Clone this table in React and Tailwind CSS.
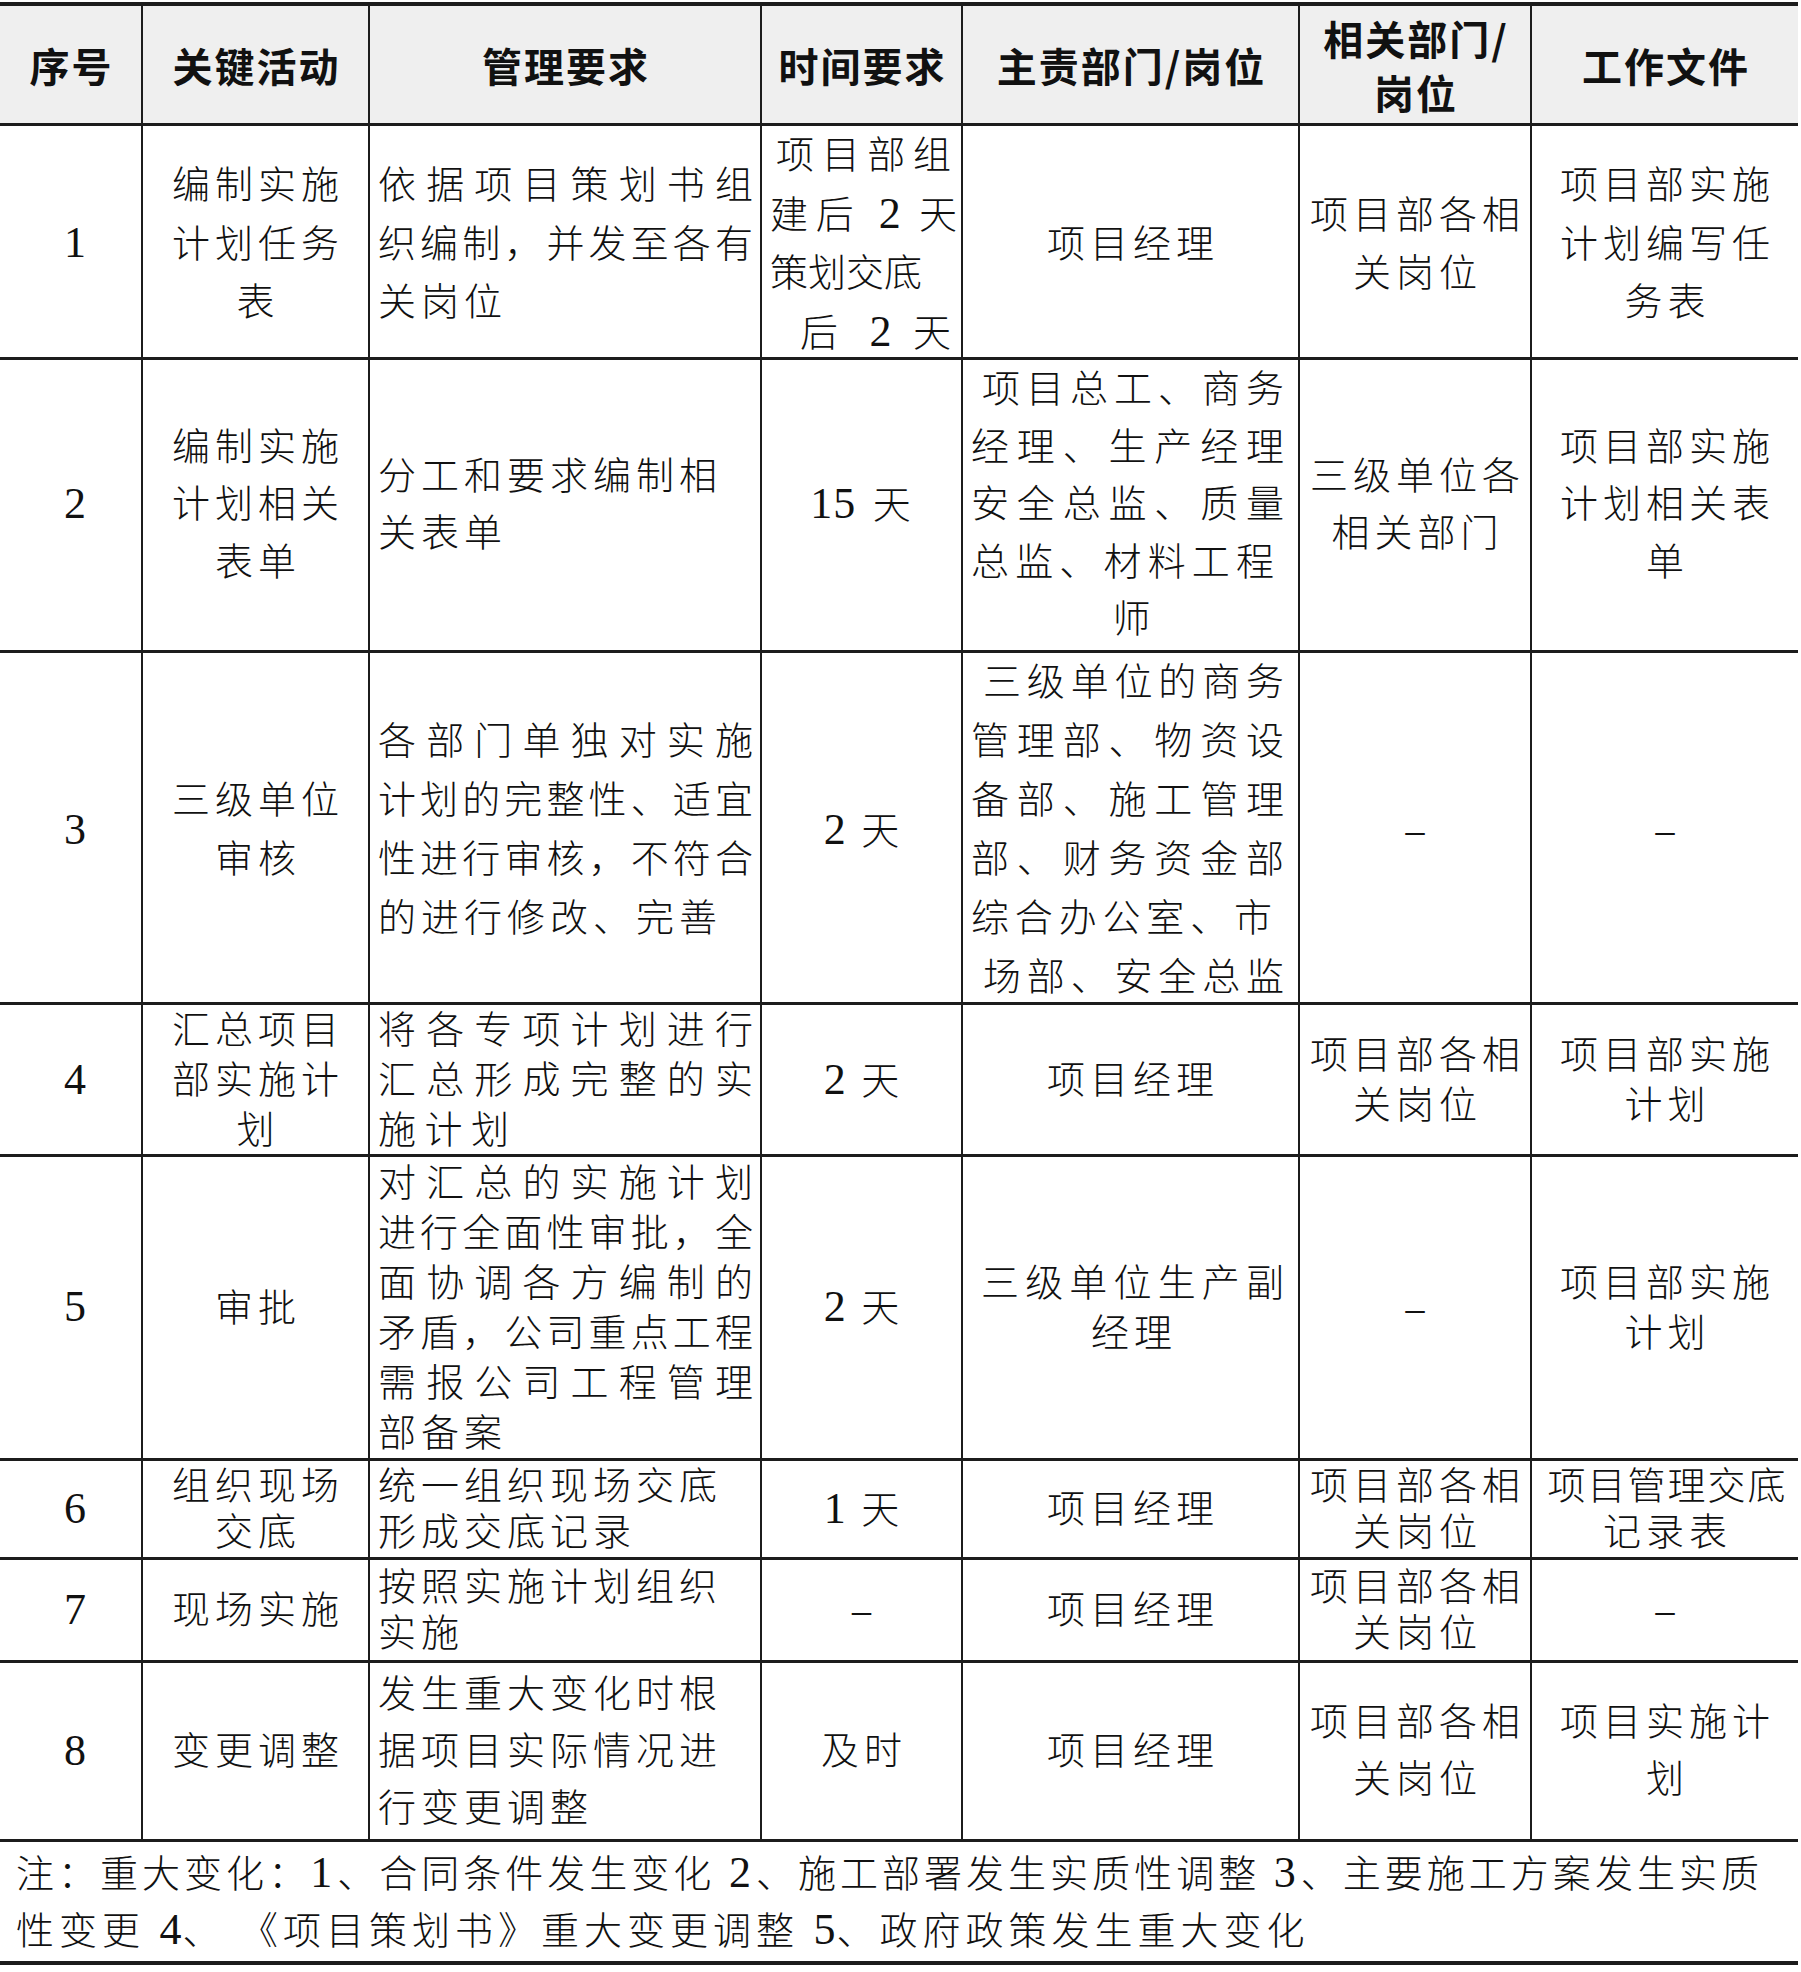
import React from "react";

const J = "text-justify [text-align-last:justify] tracking-normal";
const L = "text-left";
const C = "text-center";

const COLS = "grid grid-cols-[143px_227px_392px_201px_337px_232px_266px]";

const P3 = "pl-[8px] pr-[7px]";
const P5 = "pl-[8px] pr-[14px]";
const P1 = "pl-[10px]";

const rows = [
  {
    h: "h-[234px]",
    lh: "leading-[58.5px]",
    cells: [
      { pad: P1, lines: ["1"] },
      { lines: ["编制实施", "计划任务", "表"] },
      { pad: P3, lines: [["依据项目策划书组", J], ["织编制，并发至各有", J], ["关岗位", L]] },
      {
        pad: "pl-[8px] pr-[4px]",
        lines: [
          ["项目部组", J + " pl-[6px] pr-[6px]"],
          ["建后 2 天", J],
          ["策划交底", L + " tracking-normal"],
          ["后 2 天", J + " pl-[30px] pr-[6px]"],
        ],
      },
      { lines: ["项目经理"] },
      { lines: ["项目部各相", "关岗位"] },
      { lines: ["项目部实施", "计划编写任", "务表"] },
    ],
  },
  {
    h: "h-[293px]",
    lh: "leading-[57.5px]",
    cells: [
      { pad: P1, lines: ["2"] },
      { lines: ["编制实施", "计划相关", "表单"] },
      { pad: P3, lines: [["分工和要求编制相", L], ["关表单", L]] },
      { lines: [["15 天", C + " tracking-[7px]"]] },
      {
        pad: P5,
        lines: [
          ["项目总工、商务", J + " pl-[11px]"],
          ["经理、生产经理", J],
          ["安全总监、质量", J],
          ["总监、材料工程", J + " pr-[10px]"],
          ["师", C + " pl-[13px]"],
        ],
      },
      { lines: ["三级单位各", "相关部门"] },
      { lines: ["项目部实施", "计划相关表", "单"] },
    ],
  },
  {
    h: "h-[352px]",
    lh: "leading-[59px]",
    cells: [
      { pad: P1, lines: ["3"] },
      { lines: ["三级单位", "审核"] },
      {
        pad: P3,
        lines: [
          ["各部门单独对实施", J],
          ["计划的完整性、适宜", J],
          ["性进行审核，不符合", J],
          ["的进行修改、完善", L],
        ],
      },
      { lines: ["2 天"] },
      {
        pad: P5,
        lines: [
          ["三级单位的商务", J + " pl-[12px]"],
          ["管理部、物资设", J],
          ["备部、施工管理", J],
          ["部、财务资金部", J],
          ["综合办公室、市", J + " pr-[12px]"],
          ["场部、安全总监", J + " pl-[12px]"],
        ],
      },
      { lines: ["–"] },
      { lines: ["–"] },
    ],
  },
  {
    h: "h-[152px]",
    lh: "leading-[50px]",
    cells: [
      { pad: P1, lines: ["4"] },
      { lines: ["汇总项目", "部实施计", "划"] },
      {
        pad: P3,
        lines: [
          ["将各专项计划进行", J],
          ["汇总形成完整的实", J],
          ["施计划", L + " tracking-[8.5px]"],
        ],
      },
      { lines: ["2 天"] },
      { lines: ["项目经理"] },
      { lines: ["项目部各相", "关岗位"] },
      { lines: ["项目部实施", "计划"] },
    ],
  },
  {
    h: "h-[304px]",
    lh: "leading-[50px]",
    cells: [
      { pad: P1, lines: ["5"] },
      { lines: ["审批"] },
      {
        pad: P3,
        lines: [
          ["对汇总的实施计划", J],
          ["进行全面性审批，全", J],
          ["面协调各方编制的", J],
          ["矛盾，公司重点工程", J],
          ["需报公司工程管理", J],
          ["部备案", L],
        ],
      },
      { lines: ["2 天"] },
      { pad: P5, lines: [["三级单位生产副", J + " pl-[10px]"], ["经理", C + " pl-[13px]"]] },
      { lines: ["–"] },
      { lines: ["项目部实施", "计划"] },
    ],
  },
  {
    h: "h-[99px]",
    lh: "leading-[46px]",
    cells: [
      { pad: P1, lines: ["6"] },
      { lines: ["组织现场", "交底"] },
      { pad: P3, lines: [["统一组织现场交底", L], ["形成交底记录", L]] },
      { lines: ["1 天"] },
      { lines: ["项目经理"] },
      { lines: ["项目部各相", "关岗位"] },
      { lines: [["项目管理交底", C + " tracking-[2px]"], "记录表"] },
    ],
  },
  {
    h: "h-[103px]",
    lh: "leading-[46px]",
    cells: [
      { pad: P1, lines: ["7"] },
      { lines: ["现场实施"] },
      { pad: P3, lines: [["按照实施计划组织", L], ["实施", L]] },
      { lines: ["–"] },
      { lines: ["项目经理"] },
      { lines: ["项目部各相", "关岗位"] },
      { lines: ["–"] },
    ],
  },
  {
    h: "h-[179px]",
    lh: "leading-[57px]",
    cells: [
      { pad: P1, lines: ["8"] },
      { lines: ["变更调整"] },
      {
        pad: P3,
        lines: [
          ["发生重大变化时根", L],
          ["据项目实际情况进", L],
          ["行变更调整", L],
        ],
      },
      { lines: ["及时"] },
      { lines: ["项目经理"] },
      { lines: ["项目部各相", "关岗位"] },
      { lines: ["项目实施计", "划"] },
    ],
  },
];

const header = [
  ["序号"],
  ["关键活动"],
  ["管理要求"],
  ["时间要求"],
  ["主责部门/岗位"],
  ["相关部门/", "岗位"],
  ["工作文件"],
];

function rich(t) {
  return t.split(/([0-9]+)/).map((p, i) =>
    /^[0-9]+$/.test(p) ? (
      <span key={i} className="text-[44px] tracking-[1px]">
        {p}
      </span>
    ) : (
      <React.Fragment key={i}>{p}</React.Fragment>
    )
  );
}

function Cell({ cell, last }) {
  return (
    <div
      className={
        "flex flex-col justify-center border-[#1c1c1c] " +
        (last ? "" : "border-r-2 ") +
        (cell.pad || "pl-[5px]")
      }
    >
      {cell.lines.map((ln, i) => {
        const [t, cls] = typeof ln === "string" ? [ln, C] : ln;
        return (
          <div key={i} className={"whitespace-pre " + cls}>
            {rich(t)}
          </div>
        );
      })}
    </div>
  );
}

export default function App() {
  return (
    <div className="w-[1801px] min-h-[1972px] bg-white pt-[2px] text-[#111]">
      <div className="w-[1798px] border-t-4 border-[#1c1c1c]">
        <div
          className={
            COLS +
            " h-[120px] bg-[#efefef] border-b-[3px] border-[#1c1c1c] font-['Noto_Sans_CJK_SC',sans-serif] font-bold text-[40px] leading-[54px] tracking-[2px]"
          }
        >
          {header.map((lines, i) => (
            <div
              key={i}
              className={
                "flex flex-col justify-center items-center pl-[2px] border-[#1c1c1c] " +
                (i < 6 ? "border-r-2" : "")
              }
            >
              {lines.map((t, k) => (
                <div key={k} className="whitespace-nowrap">
                  {t}
                </div>
              ))}
            </div>
          ))}
        </div>
        <div className="font-['Liberation_Serif','Noto_Sans_CJK_SC',serif] font-light text-[38px] tracking-[5px]">
          {rows.map((row, r) => (
            <div
              key={r}
              className={COLS + " " + row.h + " " + row.lh + " border-b-[3px] border-[#1c1c1c]"}
            >
              {row.cells.map((cell, c) => (
                <Cell key={c} cell={cell} last={c === 6} />
              ))}
            </div>
          ))}
          <div className="h-[123px] border-b-4 border-[#1c1c1c] flex flex-col justify-center pl-[16px] pr-[39px] leading-[56px]">
            <div className={"whitespace-nowrap " + J}>
              {rich("注：重大变化：1、合同条件发生变化 2、施工部署发生实质性调整 3、主要施工方案发生实质")}
            </div>
            <div className="whitespace-pre text-left">
              {rich("性变更 4、 《项目策划书》重大变更调整 5、政府政策发生重大变化")}
            </div>
          </div>
        </div>
      </div>
    </div>
  );
}
